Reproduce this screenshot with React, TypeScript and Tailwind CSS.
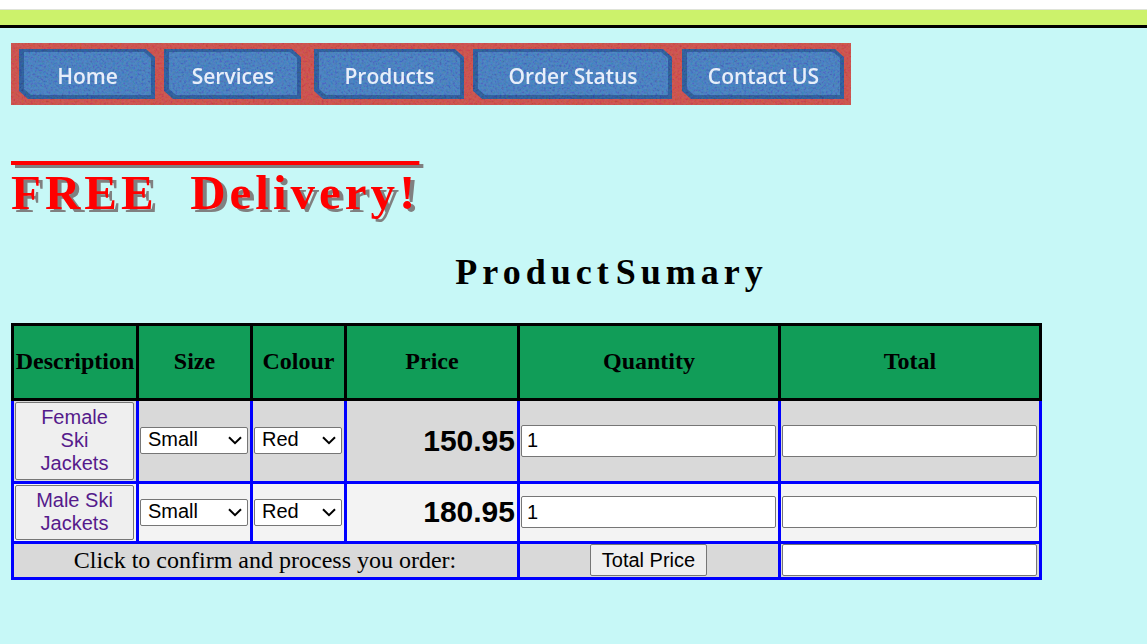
import React from 'react';

const links = [
  { label: 'Home', box: 'w-[136px]' },
  { label: 'Services', box: 'w-[137px] ml-[9px]' },
  { label: 'Products', box: 'w-[150px] ml-[13px]' },
  { label: 'Order Status', box: 'w-[199px] ml-[9px]' },
  { label: 'Contact US', box: 'w-[162px] ml-[10px]' },
];

const rows = [
  { name: 'Female Ski Jackets', price: '150.95', height: 'h-[83px]', bg: 'bg-[#d9d9d9]' },
  { name: 'Male Ski Jackets', price: '180.95', height: 'h-[60px]', bg: 'bg-[#f3f3f3]' },
];

const heads = ['Description', 'Size', 'Colour', 'Price', 'Quantity', 'Total'];

const cell = 'border-[3px] border-[#0000ff] pt-0 pl-px pr-[2px] pb-px';
const control = 'border border-[#767676] rounded-[2px] text-black text-xl font-["Liberation_Sans",Arial,sans-serif]';
const field = `${control} block w-full h-8 bg-white px-[5px]`;

function NavLink({ label, box }: { label: string; box: string }) {
  return (
    <a
      href="#"
      className={`${box} flex h-[50px] bg-[#2f5a97] pt-[3px] pr-[4px] pb-[4px] pl-[5px] [clip-path:polygon(0_0,calc(100%_-_9px)_0,100%_8px,100%_100%,9px_100%,0_calc(100%_-_8px))]`}
    >
      <span className="flex grow items-center justify-center bg-[#4779bc] pt-[6px] text-[21px] font-semibold whitespace-nowrap text-[#e6eefa] [clip-path:polygon(0_0,calc(100%_-_7px)_0,100%_6px,100%_100%,7px_100%,0_calc(100%_-_6px))]">
        {label}
      </span>
    </a>
  );
}

function Grain() {
  return (
    <svg className="pointer-events-none absolute inset-0 h-full w-full opacity-15 mix-blend-overlay" aria-hidden="true">
      <filter id="grain">
        <feTurbulence type="fractalNoise" baseFrequency="0.45" numOctaves="2" seed="4" />
        <feColorMatrix values="2.4 0 0 0 -0.7  0 2.4 0 0 -0.7  0 0 2.4 0 -0.7  0 0 0 0 1" />
      </filter>
      <rect width="100%" height="100%" filter="url(#grain)" />
    </svg>
  );
}

function Select({ label, options }: { label: string; options: string[] }) {
  return (
    <div className="relative">
      <select aria-label={label} className={`${control} block h-[27px] w-full appearance-none bg-white px-[7px] pb-[3px] leading-[22px]`}>
        {options.map((o) => (
          <option key={o}>{o}</option>
        ))}
      </select>
      <svg
        className="pointer-events-none absolute top-[9px] right-[6px] h-[9px] w-[14px]"
        viewBox="0 0 14 9"
        fill="none"
        stroke="#000"
        strokeWidth="2"
        aria-hidden="true"
      >
        <path d="M1 1.2 7 7.2 13 1.2" />
      </svg>
    </div>
  );
}

export default function App() {
  return (
    <div className="min-h-screen bg-[#c7f8f7] font-['Liberation_Serif','Times_New_Roman',serif] text-black">
      <header>
        <div className="h-[9px] bg-white" />
        <div className="h-[19px] border-t border-b-[3px] border-t-[#dfe3d8] border-b-black bg-[#ccf26b]" />
      </header>
      <main className="px-[11px] pt-[15px]">
        <nav className="relative isolate flex h-[62px] w-fit bg-[#c94f4b] pt-[6px] pr-[7px] pl-2 font-['Open_Sans','Noto_Sans',sans-serif]">
          {links.map((l) => (
            <NavLink key={l.label} {...l} />
          ))}
          <Grain />
        </nav>

        <h1 className="mt-[60px] text-[49px] leading-[55px] font-bold tracking-[4px] text-[#ff0000] overline decoration-4 [text-shadow:4px_3px_#808080]">
          FREE&nbsp; Delivery!
        </h1>

        <h2 className="mt-[31px] flex justify-center gap-[2px] pl-[76px] text-4xl leading-[42px] font-bold tracking-[5px]">
          <span>Product</span> <span>Sumary</span>
        </h2>

        <table className="mt-[30px] w-full max-w-[1031px] table-fixed border-collapse text-2xl leading-7">
          <colgroup>
            <col className="w-[125px]" />
            <col className="w-[114px]" />
            <col className="w-[94px]" />
            <col className="w-[173px]" />
            <col className="w-[261px]" />
            <col className="w-[261px]" />
          </colgroup>
          <thead>
            <tr className="h-[75px] bg-[#119d58]">
              {heads.map((h) => (
                <th key={h} scope="col" className="border-[3px] border-black px-px pt-0 pb-[2px] font-bold">
                  {h}
                </th>
              ))}
            </tr>
          </thead>
          <tbody>
            {rows.map((r) => (
              <tr key={r.name} className={`${r.height} ${r.bg}`}>
                <td className={cell}>
                  <button type="button" className={`${control} block w-full bg-[#efefef] px-[6px] pt-[3px] pb-1 leading-[23px]`}>
                    <span className="block px-2 text-[#551a8b]">{r.name}</span>
                  </button>
                </td>
                <td className={cell}>
                  <Select label={`${r.name} size`} options={['Small', 'Medium', 'Large']} />
                </td>
                <td className={cell}>
                  <Select label={`${r.name} colour`} options={['Red', 'Blue']} />
                </td>
                <td className={`${cell} text-right font-['Liberation_Sans',Arial,sans-serif] text-3xl font-bold`}>
                  {r.price}
                </td>
                <td className={cell}>
                  <input aria-label={`${r.name} quantity`} defaultValue="1" className={field} />
                </td>
                <td className={cell}>
                  <input aria-label={`${r.name} total`} className={field} />
                </td>
              </tr>
            ))}
            <tr className="h-9 bg-[#d9d9d9]">
              <td colSpan={4} className={`${cell} text-center`}>
                Click to confirm and process you order:
              </td>
              <td className={cell}>
                <button type="button" className={`${control} mx-auto block h-8 bg-[#efefef] px-[11px] leading-[23px]`}>
                  Total Price
                </button>
              </td>
              <td className={cell}>
                <input aria-label="Order total" className={field} />
              </td>
            </tr>
          </tbody>
        </table>
      </main>
    </div>
  );
}
